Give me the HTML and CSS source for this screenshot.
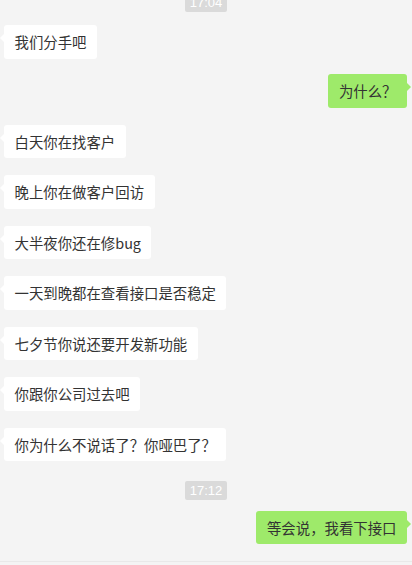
FILE: index.html
```html
<!DOCTYPE html>
<html lang="zh-CN">
<head>
    <meta charset="UTF-8">
    <meta name="viewport" content="width=device-width, initial-scale=1.0">
    <title>聊天</title>
    <link rel="stylesheet" href="styles.css">
</head>
<body>
    <div class="chat">
        <div class="time time-first"><span>17:04</span></div>

        <div class="row left first"><div class="bubble">我们分手吧</div></div>
        <div class="row right"><div class="bubble">为什么？</div></div>
        <div class="row left"><div class="bubble">白天你在找客户</div></div>
        <div class="row left"><div class="bubble">晚上你在做客户回访</div></div>
        <div class="row left"><div class="bubble">大半夜你还在修bug</div></div>
        <div class="row left"><div class="bubble">一天到晚都在查看接口是否稳定</div></div>
        <div class="row left"><div class="bubble">七夕节你说还要开发新功能</div></div>
        <div class="row left"><div class="bubble">你跟你公司过去吧</div></div>
        <div class="row left"><div class="bubble">你为什么不说话了？你哑巴了？</div></div>

        <div class="time time-last"><span>17:12</span></div>

        <div class="row right after-time"><div class="bubble">等会说，我看下接口</div></div>
    </div>
    <div class="footer"></div>
</body>
</html>
```

FILE: styles.css
```css
body {
    margin: 0;
    background-color: #f4f4f4;
    font-family: "Noto Sans CJK SC", "Liberation Sans", sans-serif;
    color: #333;
    overflow: hidden;
}
.chat {
    display: flex;
    flex-direction: column;
    padding: 0 5px 0 4px;
}
.time {
    display: flex;
    justify-content: center;
    padding-left: 1px;
}
.time span {
    background-color: #dadada;
    color: #fff;
    font-family: "Liberation Sans", sans-serif;
    font-size: 13px;
    line-height: 19px;
    padding: 0 5px;
    border-radius: 2px;
}
.time-first {
    margin-top: -7px;
}
.time-last {
    margin-top: 19.5px;
}
.row {
    display: flex;
    margin-top: 17px;
}
.row.first {
    margin-top: 13px;
}
.row.right {
    justify-content: flex-end;
    margin-top: 15.5px;
}
.row.after-time {
    margin-top: 11px;
}
.bubble {
    position: relative;
    background-color: #fff;
    font-size: 14.4px;
    line-height: 20px;
    height: 20px;
    padding: 7px 10.5px 6.5px;
    border-radius: 3px;
    white-space: nowrap;
}
.right .bubble {
    background-color: #9eea6a;
}
/* little tails */
.bubble::before {
    content: "";
    position: absolute;
    top: 9px;
    border: 4px solid transparent;
}
.left .bubble::before {
    left: -8px;
    border-right-color: #fff;
}
.right .bubble::before {
    right: -8px;
    border-left-color: #9eea6a;
}
.footer {
    position: absolute;
    left: 0;
    right: 0;
    top: 561px;
    height: 10px;
    border-top: 1px solid #e9e9e9;
    background-color: #f4f4f4;
}
```
